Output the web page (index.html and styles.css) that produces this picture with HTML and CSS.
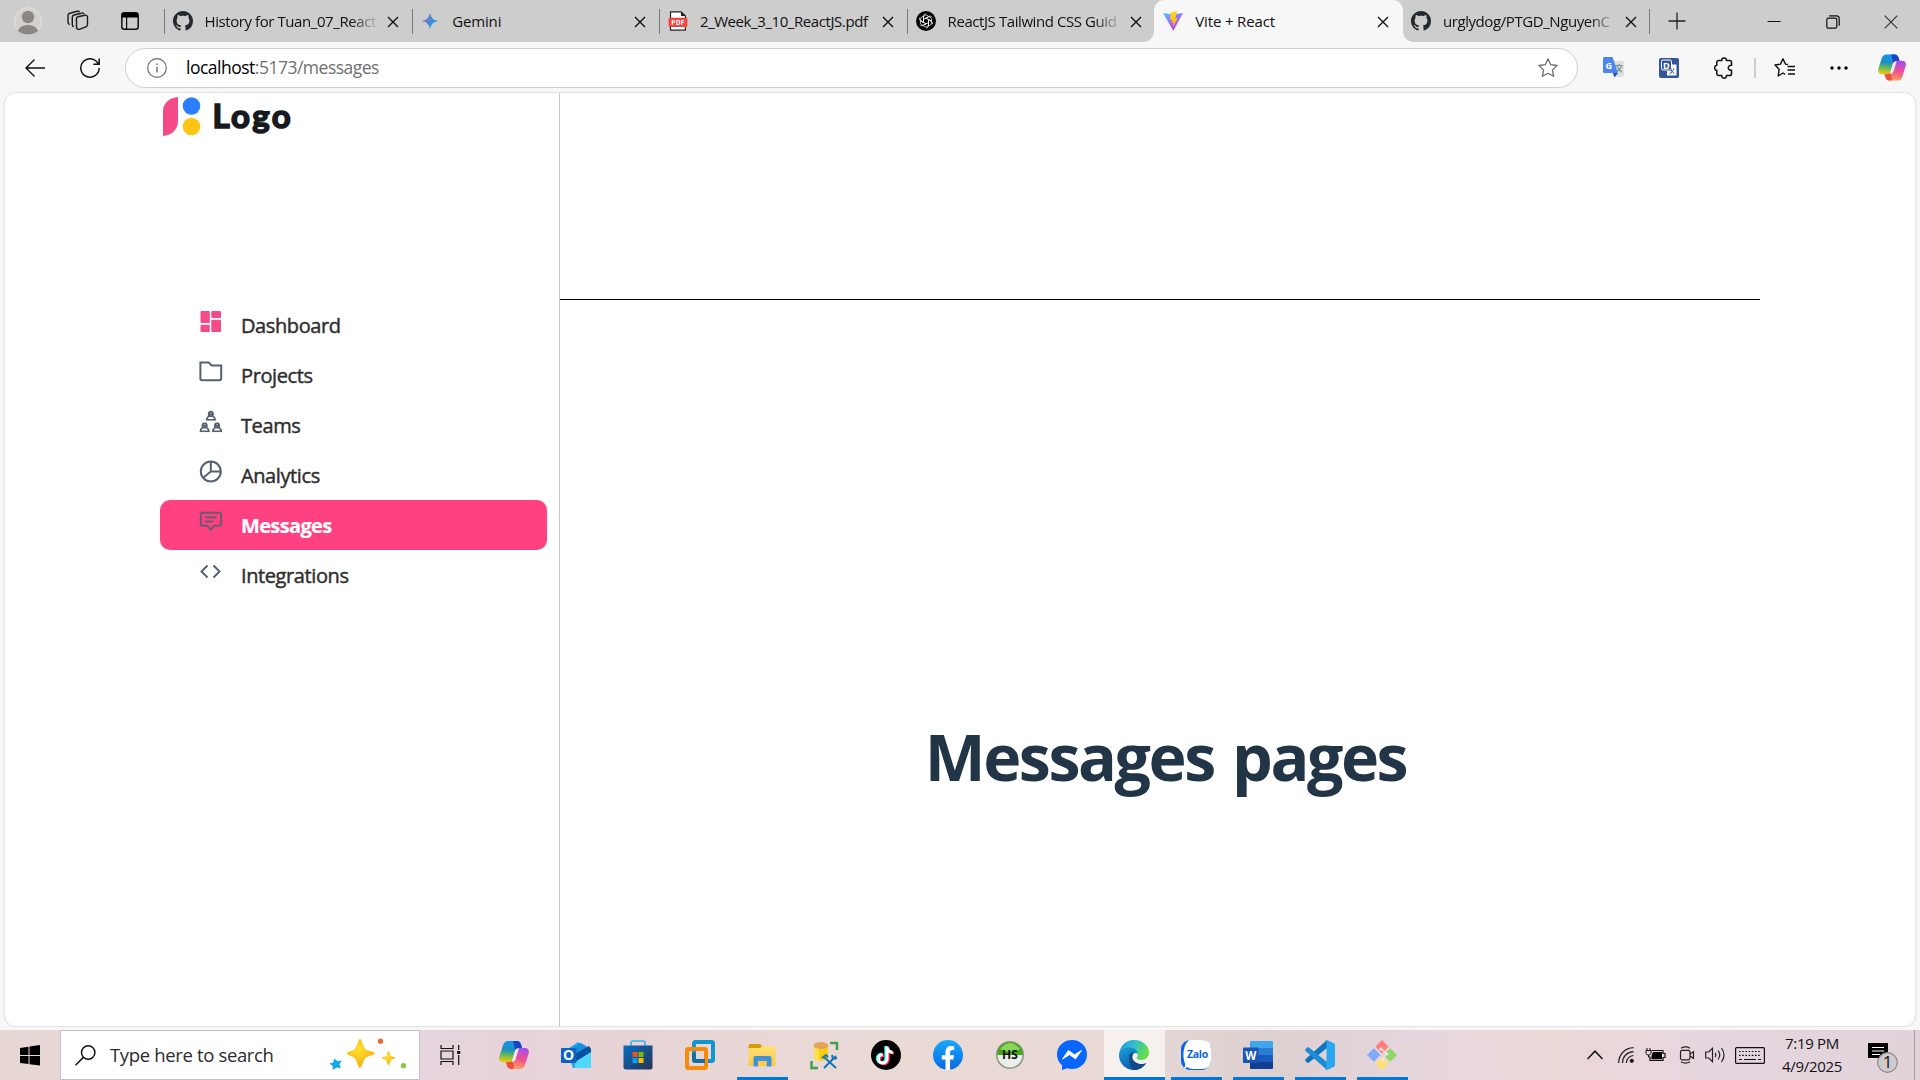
FILE: index.html
```html
<!DOCTYPE html>
<html lang="en">
<head>
<meta charset="utf-8">
<title>Vite + React</title>
<link rel="stylesheet" href="styles.css">
</head>
<body>
<svg class="defs" aria-hidden="true">
  <defs>
    <linearGradient id="gem" x1="0" y1="0.3" x2="1" y2="0.6"><stop offset="0.1" stop-color="#9a70bd"/><stop offset="0.5" stop-color="#4a86d6"/><stop offset="1" stop-color="#1aa6e0"/></linearGradient>
    <linearGradient id="vt" x1="0" y1="0" x2="0.6" y2="1"><stop offset="0" stop-color="#41d1ff"/><stop offset="0.55" stop-color="#9a6bff"/><stop offset="1" stop-color="#bd34fe"/></linearGradient>
    <linearGradient id="vy" x1="0" y1="0" x2="0" y2="1"><stop offset="0" stop-color="#ffdd35"/><stop offset="1" stop-color="#ffa800"/></linearGradient>
    <linearGradient id="cpa" x1="0.4" y1="0" x2="0.3" y2="1"><stop offset="0" stop-color="#1593f0"/><stop offset="0.4" stop-color="#1d8fc4"/><stop offset="0.65" stop-color="#62b85a"/><stop offset="1" stop-color="#f5cf0a"/></linearGradient>
    <linearGradient id="cpb" x1="0.6" y1="0" x2="0.4" y2="1"><stop offset="0" stop-color="#a54df0"/><stop offset="0.5" stop-color="#ee5090"/><stop offset="1" stop-color="#ffa45c"/></linearGradient>
    <linearGradient id="eg" x1="0" y1="0" x2="1" y2="0.4"><stop offset="0" stop-color="#2190d8"/><stop offset="0.5" stop-color="#2fbfd0"/><stop offset="1" stop-color="#66dc4a"/></linearGradient>
    <linearGradient id="eb" x1="0" y1="0" x2="0.6" y2="1"><stop offset="0" stop-color="#1ba0e0"/><stop offset="1" stop-color="#0c59a4"/></linearGradient>
    <linearGradient id="st" x1="0" y1="0" x2="1" y2="1"><stop offset="0" stop-color="#0b6cc0"/><stop offset="1" stop-color="#243452"/></linearGradient>
    <linearGradient id="fo" x1="0" y1="0" x2="0" y2="1"><stop offset="0" stop-color="#ffe07a"/><stop offset="1" stop-color="#fcc93e"/></linearGradient>
    <linearGradient id="fbg" x1="0" y1="0" x2="0" y2="1"><stop offset="0" stop-color="#1aa9fb"/><stop offset="1" stop-color="#0668e1"/></linearGradient>
    <radialGradient id="sp" cx="0.4" cy="0.35" r="0.7"><stop offset="0" stop-color="#ffe02e"/><stop offset="1" stop-color="#f7ac12"/></radialGradient>
    <symbol id="copilot" viewBox="0 0 30 28">
      <path d="M9 0h9c2.600 0 3.600 2 4.200 4l1 3.300h-3.600c-2 0-3.200 1.200-3.800 3l-2.400 8c-.6 2-2 3-4 3H4C.8 21.300-.4 18.600.3 15.700L4 4.200C4.900 1.500 6.500 0 9 0z" fill="url(#cpa)"/>
      <path d="M13.500 0H18c2.600 0 3.600 2 4.200 4l1 3.300h-3.600c-1.500 0-2.600.7-3.300 1.900L15.200 5C14.600 2.500 14.800.5 13.500 0z" fill="#1747c4"/>
      <path d="M21 28h-9c-2.600 0-3.600-2-4.200-4L7 20.900h3.400c2 0 3.200-1.200 3.800-3l2.400-8c.6-2 2-3 4-3H26c3.200 0 4.400 2.700 3.700 5.600L26 23.800c-.9 2.700-2.500 4.200-5 4.200z" fill="url(#cpb)"/>
      <path d="M12 28c-2.600 0-3.600-2-4.200-4L7 20.900h3.400c1.400 0 2.400-.6 3.100-1.600l1 4.700c.5 2 .3 3.500 0 4z" fill="#f0503c"/>
      <path d="M16.400 9.500c.5-1.500 1.500-2.300 3-2.300h.6l-3.300 10.900c-.7 2-2 2.900-3.900 2.900z" fill="#fff" opacity=".85"/>
    </symbol>
    <symbol id="github" viewBox="0 0 16 16"><path fill="#24292f" d="M8 0C3.580 0 0 3.580 0 8c0 3.540 2.290 6.530 5.470 7.590.4.070.55-.17.55-.38 0-.19-.01-.82-.01-1.490-2.010.37-2.530-.49-2.690-.94-.09-.23-.48-.94-.82-1.130-.28-.15-.68-.52-.01-.53.63-.01 1.080.58 1.230.82.72 1.210 1.870.87 2.330.66.070-.52.28-.87.51-1.070-1.780-.2-3.640-.89-3.640-3.950 0-.87.31-1.590.82-2.150-.08-.2-.36-1.020.08-2.120 0 0 .67-.21 2.200.82.64-.18 1.320-.27 2-.27s1.360.09 2 .27c1.530-1.040 2.200-.82 2.200-.82.44 1.100.16 1.920.08 2.120.51.56.82 1.270.82 2.150 0 3.070-1.870 3.750-3.650 3.950.29.25.54.73.54 1.480 0 1.070-.01 1.930-.01 2.200 0 .21.15.46.55.38A8.010 8.010 0 0 0 16 8c0-4.420-3.580-8-8-8z"/></symbol>
    <symbol id="x" viewBox="0 0 12 12"><path d="M1 1l10 10M11 1L1 11" stroke="#111" stroke-width="1.400" fill="none"/></symbol>
    <symbol id="person" viewBox="0 0 10 9.500"><path d="M3.200 5C2.300 1.700 3.500.9 5 .9s2.700.8 1.800 4.100M.9 8.600C1 6.400 2.200 5.600 3.400 5h3.200c1.200.6 2.400 1.400 2.500 3.600zM3.600 3.100h2.800v2H3.600z" fill="none" stroke="#56606f" stroke-width="1.700"/></symbol>
  </defs>
</svg>

<header class="tabstrip">
  <div class="strip-tools">
    <svg width="28" height="28" viewBox="0 0 28 28"><circle cx="14" cy="14" r="13.300" fill="#d3d1ce" stroke="#e4e2de"/><circle cx="14" cy="10" r="6.200" fill="#8b8785"/><path d="M4 24c2-8 18-8 20 0-5 4.800-15 4.800-20 0z" fill="#8b8785"/></svg>
    <svg width="22" height="22" viewBox="0 0 22 22" fill="none" stroke="#1a1a1a" stroke-width="1.400"><path d="M9.500 8.500c0-1 .5-1.500 1.400-1.800l7-1.500c1.400-.3 2.600.4 2.600 1.800v7.500c0 1.200-.5 1.900-1.600 2.300l-6 2.400c-1.700.6-3.400-.3-3.400-2z"/><path d="M6.700 16.800c-1-.3-1.400-1-1.400-2V7.300c0-1.300.6-2 1.800-2.300l7.800-2c1-.3 1.800.1 2.200 1"/><path d="M2.700 14.500c-1-.3-1.700-1.200-1.700-2.200V5.500c0-1.300.6-2 1.800-2.300l7.500-2c1-.2 1.900.1 2.300.9"/></svg>
    <svg width="18" height="18" viewBox="0 0 18 18"><rect x=".8" y=".8" width="16.400" height="16.400" rx="2.500" fill="none" stroke="#111" stroke-width="1.500"/><path d="M1 5V3q0-2 2-2h12q2 0 2 2v2.500H1zM5 5h1.200v12H5z" fill="#000"/></svg>
  </div>
  <nav class="tabs">
    <div class="tab"><svg class="fav" width="20" height="20"><use href="#github"/></svg><span class="title fade">History for Tuan_07_React</span><svg class="close" width="12" height="12"><use href="#x"/></svg></div>
    <div class="tab"><svg class="fav" width="20" height="20" viewBox="0 0 20 20"><path d="M10 1.500C10.800 6.500 13 9 18.500 10 13 11 10.800 13.500 10 18.500 9.200 13.500 7 11 1.500 10 7 9 9.200 6.500 10 1.500z" fill="url(#gem)"/></svg><span class="title short">Gemini</span><svg class="close" width="12" height="12"><use href="#x"/></svg></div>
    <div class="tab"><svg class="fav" width="20" height="20" viewBox="0 0 20 20"><path d="M2.500.8h10.700l4.200 4.200v14.200H2.500z" fill="#fff" stroke="#222" stroke-width="1.200"/><path d="M13 .8V5h4.500z" fill="#222"/><rect x=".6" y="6.800" width="18.800" height="9.200" rx="1" fill="#f8423f"/><text x="10" y="13.900" class="pdf" text-anchor="middle">PDF</text></svg><span class="title">2_Week_3_10_ReactJS.pdf</span><svg class="close" width="12" height="12"><use href="#x"/></svg></div>
    <div class="tab"><svg class="fav" width="20" height="20" viewBox="0 0 20 20"><circle cx="10" cy="10" r="10" fill="#000"/><g fill="none" stroke="#fff" stroke-width=".8"><path id="petal" d="M7.500 11.400V6.700c0-2.800 4-3.600 5.200-1.100M9 7.700l3.800-2.200c1.200-.7 2.700-.2 3.200.8"/><use href="#petal" transform="rotate(60 10 10)"/><use href="#petal" transform="rotate(120 10 10)"/><use href="#petal" transform="rotate(180 10 10)"/><use href="#petal" transform="rotate(240 10 10)"/><use href="#petal" transform="rotate(300 10 10)"/></g></svg><span class="title fade">ReactJS Tailwind CSS Guid</span><svg class="close" width="12" height="12"><use href="#x"/></svg></div>
    <div class="tab active"><svg class="fav" width="20" height="20" viewBox="0 0 20 20"><path d="M0 2l10 1.500L20 2 10.300 19.700z" fill="url(#vt)"/><path d="M14.300 0L7.500 1.300 7 9l2.200-.5-.7 3.400 2-.5-.8 5.300 5-9.700-2.500.5z" fill="url(#vy)"/></svg><span class="title short">Vite + React</span><svg class="close" width="12" height="12"><use href="#x"/></svg></div>
    <div class="tab"><svg class="fav" width="20" height="20"><use href="#github"/></svg><span class="title fade">urglydog/PTGD_NguyenC</span><svg class="close" width="12" height="12"><use href="#x"/></svg></div>
  </nav>
  <svg class="plus" width="18" height="18" viewBox="0 0 18 18"><path d="M9 .5v17M.5 9h17" stroke="#222" stroke-width="1.300"/></svg>
  <div class="window-controls">
    <svg width="14" height="14" viewBox="0 0 14 14"><path d="M.5 6.500h13" stroke="#111"/></svg>
    <svg width="14" height="14" viewBox="0 0 14 14" fill="none" stroke="#111" stroke-width="1.200"><rect x=".8" y="3.200" width="10" height="10" rx="1.500"/><path d="M3.200.8h7.300q2.700 0 2.700 2.700v7.300"/></svg>
    <svg width="14" height="14" viewBox="0 0 14 14"><path d="M.7.7l12.600 12.600M13.300.7L.7 13.300" stroke="#333" stroke-width="1.200"/></svg>
  </div>
</header>

<div class="toolbar">
  <svg class="back" width="20" height="18" viewBox="0 0 20 18" fill="none" stroke="#111" stroke-width="1.400"><path d="M20 9H1M9.500.6L1 9l8.500 8.400"/></svg>
  <svg class="reload" width="20" height="20" viewBox="0 0 20 20" fill="none" stroke="#111" stroke-width="1.500"><path d="M18.400 6.200A9.200 9.200 0 1 0 19.200 10M19.200.5v5.800h-5.800"/></svg>
  <div class="address">
    <svg width="20" height="20" viewBox="0 0 20 20" fill="none" stroke="#6b6b6b" stroke-width="1.200"><circle cx="10" cy="10" r="9.300"/><path d="M10 8.800v5.700M10 5.500v1.600" stroke-width="1.400"/></svg>
    <span class="url">localhost<span>:5173/messages</span></span>
    <svg class="star" width="22" height="22" viewBox="0 0 22 22"><path d="M11 1.800l2.700 5.900 6.400.8-4.700 4.400 1.200 6.400-5.600-3.100-5.600 3.100 1.200-6.400L1.900 8.500l6.400-.8z" fill="none" stroke="#6e6e6e" stroke-width="1.300" stroke-linejoin="round"/></svg>
  </div>
  <div class="extensions">
    <svg width="21" height="21" viewBox="0 0 21 21"><path d="M8 4h11.500q1.200 0 1.200 1.200v14.600H12z" fill="#dcdcdc"/><path d="M12.500 8.500h7M16 7v1.500M14 9c1 3 3 5 5 6M18.500 9c-1 3-3 5-5 6" stroke="#6f9391" stroke-width="1.100" fill="none"/><path d="M1 0h8.500l5.500 16H1.200Q0 16 0 15V1z" fill="#4a86ee"/><path d="M9.800 16H15l-3.500 4.500z" fill="#2850c0"/><text x="2.600" y="11.800" class="gicon">G</text></svg>
    <svg class="dictionary" width="20" height="20" viewBox="0 0 20 20"><rect width="20" height="20" rx="2" fill="#35559a"/><rect x="2.500" y="2" width="10" height="10" rx="1.500" fill="none" stroke="#fff"/><text x="4" y="10.500" class="dicon">D</text><path d="M13 6.500h4.500v11H8V13h5z" fill="#fff"/><path d="M10.500 15.700c2-.5 4-3 4.500-5.500M11.500 12l4 3.800" stroke="#35559a" fill="none"/></svg>
    <svg class="puzzle" width="20" height="22" viewBox="0 0 20 22"><path d="M4.500 3.500h3.200c0-3.500 4.800-3.500 4.800 0h3.200q1.800 0 1.800 1.800v3c-4.300-.4-4.300 5.400 0 5v3.400q0 1.800-1.800 1.800h-3.200c0 3.500-4.800 3.500-4.800 0H4.500q-1.700 0-1.700-1.800v-3.200c-2.900-.4-2.900-4.900 0-5.300V5.300q0-1.800 1.700-1.800z" fill="none" stroke="#111" stroke-width="1.500"/></svg>
    <i class="divider"></i>
    <svg class="favorites" width="22" height="22" viewBox="0 0 22 22" fill="none" stroke="#111" stroke-width="1.400" stroke-linejoin="round"><path d="M14 7.500l-2.500-.4L8.900 1.800 6.500 7.100l-5.500.9 4.100 4.200L4.200 19l4.700-3 2.300 1.300M13.500 9.500H21M13.500 13H21M14 17h7"/></svg>
    <svg class="more" width="18" height="4" viewBox="0 0 18 4"><circle cx="2" cy="2" r="1.700"/><circle cx="9" cy="2" r="1.700"/><circle cx="16" cy="2" r="1.700"/></svg>
    <svg class="assistant" width="28" height="27"><use href="#copilot"/></svg>
  </div>
</div>

<main class="page">
  <aside class="sidebar">
    <div class="logo">
      <svg width="38" height="39" viewBox="0 0 38 39"><path d="M0 39V14C0 6 7 .5 15 0v24c0 9-7 14.500-15 15z" fill="#f54a88"/><circle cx="28.500" cy="9" r="8.800" fill="#2b7fff"/><circle cx="28.500" cy="29.500" r="8.800" fill="#ffc414"/></svg>
      <span>Logo</span>
    </div>
    <ul class="menu">
      <li><svg width="24" height="24" viewBox="0 0 24 24" fill="#f54a88"><rect x="1.500" y="1" width="9.300" height="12" rx="1"/><rect x="12.300" y="1" width="9.700" height="7" rx="1"/><rect x="1.500" y="14.700" width="9.300" height="7.300" rx="1"/><rect x="12.300" y="9.700" width="9.700" height="12.300" rx="1"/></svg><span>Dashboard</span></li>
      <li><svg width="24" height="24" viewBox="0 0 24 24"><path d="M1.400 2.500h8.300l3 3h9.500v13q0 1.700-1.700 1.700H3q-1.600 0-1.600-1.700z" fill="none" stroke="#56606f" stroke-width="2"/></svg><span>Projects</span></li>
      <li><svg width="24" height="24" viewBox="0 0 24 24"><use href="#person" x="6.600" y=".8" width="10.500" height="10"/><use href="#person" x=".4" y="12.300" width="10.500" height="10"/><use href="#person" x="12.800" y="12.300" width="10.500" height="10"/></svg><span>Teams</span></li>
      <li><svg width="24" height="24" viewBox="0 0 24 24" fill="none" stroke="#56606f" stroke-width="2"><circle cx="11.800" cy="11.500" r="10"/><path d="M11.800 1.500v10h10M11.800 11.500l-7.600 6.300"/></svg><span>Analytics</span></li>
      <li class="current"><svg width="24" height="24" viewBox="0 0 24 24" fill="none" stroke="#6c5a70" stroke-width="2"><path d="M3.500 2.700h17q1.700 0 1.700 1.700V14q0 1.700-1.700 1.700h-5.200l-3.500 4-3.500-4H3.500q-1.700 0-1.700-1.700V4.400q0-1.700 1.700-1.700zM6 7.300h11.500M6 11.500h8"/></svg><span>Messages</span></li>
      <li><svg width="24" height="24" viewBox="0 0 24 24" fill="none" stroke="#56606f" stroke-width="2"><path d="M8.500 5.500l-6 6 6 6M14.500 5.500l6 6-6 6"/></svg><span>Integrations</span></li>
    </ul>
  </aside>
  <section class="content">
    <div class="topbar"></div>
    <h1>Messages pages</h1>
  </section>
</main>

<footer class="taskbar">
  <div class="start"><svg width="20" height="21" viewBox="0 0 20 21"><path d="M0 3l8.500-1.300v8.200H0zM9.500 1.500L20 0v9.900H9.500zM0 10.900h8.500v8.200L0 17.900zM9.500 10.900H20v9.600l-10.500-1.300z"/></svg></div>
  <div class="search">
    <svg width="21" height="21" viewBox="0 0 21 21" fill="none" stroke="#111" stroke-width="1.500"><circle cx="13.200" cy="7.500" r="6.700"/><path d="M8.300 12.400L.5 20.200"/></svg>
    <span>Type here to search</span>
    <svg class="sparkle" width="78" height="32" viewBox="0 0 78 32"><path d="M31 1c2 0 3 8 5.500 10.200C38.500 13 46 13.500 46 15.200S38.500 18 36.500 20C34 22.500 33 30 31 30s-3-7.500-5.500-10c-2-2-7.500-3-7.500-4.800s5.500-2.200 7.500-4C28 9 29 1 31 1z" fill="url(#sp)"/><path d="M59.500 13c1 0 1.500 4.200 2.500 5s4.500 1 4.500 2-3.500 1.200-4.500 2.200-1.500 5-2.500 5-1.500-4-2.500-5-4.500-1.200-4.500-2.200 3.500-1.200 4.500-2 1.500-5 2.500-5z" fill="url(#sp)"/><path d="M5 20.500l3.700 2.700 4-.7-2.200 3.700 1.200 4-4-.7L3.500 32l.3-4-3.600-2.500 4-.8z" fill="#10a7ee"/><circle cx="51.500" cy="3.200" r="2.600" fill="#f1642b"/><circle cx="74.500" cy="27.700" r="2.600" fill="#83c83c"/></svg>
  </div>
  <div class="app taskview"><svg width="21" height="20" viewBox="0 0 21 20" fill="none" stroke="#111" stroke-width="1.200"><path d="M1 0v3.500h12V0M1 20v-3.500h12V20M1 6h12v8H1zM18.700 0v5M18.700 10v10"/><path d="M17.200 6h3v3h-3z" fill="#111" stroke="none"/></svg></div>
  <div class="app"><svg width="30" height="28"><use href="#copilot"/></svg></div>
  <div class="app"><svg width="30" height="28" viewBox="0 0 30 28"><path d="M5 9L17 1l13 8v16q0 2-2 2H12z" fill="#28a8ea"/><path d="M11 7l9-5 8 5-12 9z" fill="#1490df"/><path d="M14 13l14-8 2 3v4L15 21z" fill="#0b4ea2"/><path d="M14 21l16-10v14q0 2-2 2H14z" fill="#50d9ff"/><rect y="7" width="15.500" height="15" rx="1" fill="#0a64c0"/><text x="7.700" y="19" class="olk" text-anchor="middle">O</text></svg></div>
  <div class="app"><svg width="30" height="30" viewBox="0 0 30 30"><path d="M8 7V3q0-2 2-2h10q2 0 2 2v4" fill="none" stroke="#35b7ee" stroke-width="1.700"/><path d="M.5 5.500h29V27q0 2.500-2.500 2.500H3Q.5 29.500.5 27z" fill="url(#st)"/><path d="M9.500 12h5v5h-5z" fill="#f25022"/><path d="M15.500 12h5v5h-5z" fill="#7fba00"/><path d="M9.500 18h5v5h-5z" fill="#00a4ef"/><path d="M15.500 18h5v5h-5z" fill="#ffb900"/></svg></div>
  <div class="app"><svg width="30" height="30" viewBox="0 0 30 30" fill="none" stroke-width="4"><rect x="9" y="2" width="19" height="19" rx="1.500" stroke="#0f95d1"/><rect x="2" y="9" width="19" height="19" rx="1.500" stroke="#f58a0b"/><path d="M9 13v6.500q0 1.500 1.500 1.500H20" stroke="#146f9f"/></svg></div>
  <div class="app open"><svg width="28" height="25" viewBox="0 0 28 25"><path d="M.5 3Q.5 1 2.500 1h9q1.500 0 2 1.500L14 5H.5z" fill="#dd9900"/><path d="M.5 5H12l2-2h13.500v20H.5z" fill="url(#fo)"/><path d="M5.500 23.500V15q0-2 2-2h14q2 0 2 2v8.500h-4.700V18H10v5.500z" fill="#3f92d8"/></svg></div>
  <div class="app"><svg width="29" height="29" viewBox="0 0 29 29"><path d="M4 4h14v14q-7 3-14 0z" fill="#fbcd0d"/><path d="M4 4h5v15q-3 0-5-1z" fill="#ffe14a"/><ellipse cx="11" cy="4.500" rx="7.500" ry="3.500" fill="#e5a35c"/><path d="M20 2h7v7M1.500 20v7H8" fill="none" stroke="#42a04b" stroke-width="2.500"/><path d="M14 16l12 11M26 15L14 27M12 17l4-3 2 2M22 14l1 4 4-1" fill="none" stroke="#1676bd" stroke-width="2"/></svg></div>
  <div class="app"><svg width="30" height="30" viewBox="0 0 30 30"><circle cx="15" cy="15" r="15"/><g fill="none" stroke-width="3"><path d="M16 6.500v12.300a4.300 4.300 0 1 1-4.300-4.300M16 7c.5 3.500 2.500 5.200 5.700 5.400" stroke="#25f4ee" transform="translate(-1.200 -.5)"/><path d="M16 6.500v12.300a4.300 4.300 0 1 1-4.300-4.300M16 7c.5 3.500 2.500 5.200 5.700 5.400" stroke="#fe2c55" transform="translate(1.200 .9)"/><path d="M16 6.500v12.300a4.300 4.300 0 1 1-4.300-4.300M16 7c.5 3.500 2.500 5.200 5.700 5.400" stroke="#fff"/></g></svg></div>
  <div class="app"><svg width="30" height="30" viewBox="0 0 30 30"><circle cx="15" cy="15" r="15" fill="url(#fbg)"/><path d="M12.500 30V19.500H8.800v-4.300h3.700V12c0-4 2.300-6 5.700-6 1.600 0 3 .3 3 .3V10h-1.800c-1.700 0-2.300 1-2.300 2.200v3h4l-.7 4.300h-3.300V30z" fill="#fff"/></svg></div>
  <div class="app"><svg width="30" height="30" viewBox="0 0 30 30"><circle cx="15" cy="15" r="13.200" fill="#eceeea" stroke="#8c968b" stroke-width="1.600"/><path d="M2 15a13 13 0 0 1 26 0z" fill="#46a51a"/><path d="M5 9Q15-3 25 9q-10 5-20 0z" fill="#8ad45a"/><text x="15" y="19.200" class="hs" text-anchor="middle">HS</text></svg></div>
  <div class="app"><svg width="30" height="30" viewBox="0 0 30 30"><path d="M15 0C6.500 0 0 6.200 0 14.500c0 4.300 1.800 8 5 10.700V30l5.300-1.700c1.500.4 3 .7 4.700.7 8.500 0 15-6.200 15-14.500S23.500 0 15 0z" fill="#0866ff"/><path d="M5.500 19l6-8.500 6 4.300 7-4.300-6 8.300-6-4.200z" fill="#fff" stroke="#fff" stroke-width="1" stroke-linejoin="round"/></svg></div>
  <div class="app focus"><svg width="30" height="30" viewBox="0 0 30 30"><path d="M0 16C0 7 6 0 15 0c9 0 15 6 15 12.500 0 5-4 7.500-8 7.500-4.500 0-5-2-3.500-3.700C20 12 15 9 10 9 5 9 1 12 0 16z" fill="url(#eg)"/><path d="M0 15c.5-5 5-7.500 10-7.500 6 0 9 3.500 8.800 7C17.500 11.500 13 13 13 18c0 5 5 9 11 8-2.500 2.800-6 4-9 4C6 30 0 23 0 15z" fill="url(#eb)"/><path d="M10 18c0-3.500 2-6 5-6-3 2.500-2.500 10 5 11.700 3 .6 5.500 0 7.500-1-2 4-7 7.300-12.500 7.300-3-1-5-6-5-12z" fill="#114a8b"/></svg></div>
  <div class="app open"><svg width="30" height="30" viewBox="0 0 30 30"><rect width="30" height="30" rx="9" fill="#0b63e5"/><path d="M8 0h13q9 0 9 9v11q0 9-9 9H12q-4 0-6-2-1 1.500-3.500 1.500C5 26 4 24 3.500 22 1.500 16 2 5 8 0z" fill="#fff"/><text x="16.500" y="17.500" class="zalo" text-anchor="middle">Zalo</text></svg></div>
  <div class="app open"><svg width="30" height="28" viewBox="0 0 30 28"><path d="M8 0h21q1 0 1 1v6H7V1q0-1 1-1z" fill="#41a5ee"/><path d="M7 7h23v7H7z" fill="#2b7cd3"/><path d="M7 14h23v7H7z" fill="#185abd"/><path d="M7 21h23v6q0 1-1 1H8q-1 0-1-1z" fill="#103f91"/><rect y="6.500" width="15.500" height="15.500" rx="1" fill="#1a55b5"/><text x="7.700" y="18.600" class="wrd" text-anchor="middle">W</text></svg></div>
  <div class="app open"><svg width="30" height="30" viewBox="0 0 30 30"><path d="M22 0v8L4 22.500q-1 .7-2 0L.6 21q-.9-1 0-2z" fill="#0f74bd"/><path d="M22 30v-8L4 7.500q-1-.7-2 0L.6 9q-.9 1 0 2z" fill="#1c8cd4"/><path d="M22 0l7 3.300q1 .6 1 1.700v20q0 1.100-1 1.700L22 30q-1 0-2-1l1.500-.5V1.500L20 1q1-1 2-1z" fill="#2aa7f0"/></svg></div>
  <div class="app open"><svg width="30" height="30" viewBox="0 0 30 30"><path d="M15 0l6.700 6.700L15 13.500 8.300 6.700z" fill="#ff7e7e"/><path d="M23.200 8.200L30 15l-6.800 6.800L16.500 15z" fill="#8fd568"/><path d="M15 16.500l6.700 6.800L15 30l-6.700-6.700z" fill="#ffe073"/><path d="M6.800 8.200l6.700 6.800-6.700 6.800L0 15z" fill="#7fabff"/><path d="M14 9l5 4-3 7" fill="none" stroke="#f1e5e4" stroke-width="1.500"/><circle cx="14" cy="9" r="1.600" fill="#f1e5e4"/><circle cx="20" cy="14" r="1.600" fill="#f1e5e4"/><circle cx="15.500" cy="20" r="1.600" fill="#f1e5e4"/></svg></div>
  <div class="tray">
    <svg width="16" height="10" viewBox="0 0 16 10"><path d="M.5 9L8 1.200 15.500 9" fill="none" stroke="#111" stroke-width="1.500"/></svg>
    <svg class="wifi" width="16" height="16" viewBox="0 0 16 16" fill="none" stroke="#222" stroke-width="1.200"><path d="M.7 16C.7 7.500 7 1 15.500.7M4.500 16C4.500 9.500 9 5 15.500 4.700M8.300 16c0-4 3-7.200 7.200-7.500"/><circle cx="13.800" cy="13.800" r="1.500" fill="#111"/></svg>
    <svg class="battery" width="21" height="14" viewBox="0 0 21 14"><path d="M6.500 2.500H18v3h2v4h-2v3H5V9" fill="none" stroke="#111" stroke-width="1.200"/><path d="M8 4h9v7.200H6.500V8z"/><path d="M1 2.500h5v3L4.700 7H2.300L1 5.500zM2 0v2.500M5 0v2.500M3.500 7v2h2" fill="none" stroke="#111"/></svg>
    <svg class="camera" width="16" height="18" viewBox="0 0 16 18" fill="none" stroke="#222" stroke-width="1.200"><rect x="1.500" y="4.300" width="9.500" height="9.500" rx="1.800"/><path d="M11 8l3.500-2.200v6.500L11 10M2 2.200Q6.500-.5 11 2.200M2 15.800q4.500 2.700 9 0"/></svg>
    <svg class="speaker" width="21" height="16" viewBox="0 0 21 16" fill="none" stroke="#222" stroke-width="1.200"><path d="M.7 5h3L7.500 1.300v13.400L3.700 11h-3zM10 6q1.700 2 0 4M13 3.500q3.500 4.500 0 9M16.500 1q5 7 0 14"/></svg>
    <svg class="keyboard" width="30" height="17" viewBox="0 0 30 17" fill="none" stroke="#111" stroke-width="1.200"><rect x=".6" y=".6" width="28.800" height="15.800" rx="1"/><path d="M4 4.500h22M4 8.300h22" stroke-dasharray="1.600 1.600"/><path d="M4 12.500h3M9 12.500h12M23 12.500h3"/></svg>
  </div>
  <div class="clock"><span class="time">7:19 PM</span><span class="date">4/9/2025</span></div>
  <div class="notice"><svg width="32" height="32" viewBox="0 0 32 32"><path d="M0 0h20v15h-4v5l-5-5H0z"/><path d="M4 4.500h12M4 8h12M4 11.500h8" stroke="#fff" stroke-width="1.200"/><circle cx="19.500" cy="19.500" r="9.800" fill="#cfcacc" stroke="#8e898b" stroke-width="1.200"/><text x="19.500" y="25" class="count" text-anchor="middle">1</text></svg></div>
  <i class="desktop-edge"></i>
</footer>
</body>
</html>
```
FILE: styles.css
```css
* { box-sizing: border-box; }
body {
  margin: 0;
  width: 1920px;
  height: 1080px;
  overflow: hidden;
  display: flex;
  flex-direction: column;
  background: #f7f7f7;
  font-family: "Open Sans", "Noto Sans", sans-serif;
  color: #111;
}
svg { display: block; flex: none; }
span { white-space: nowrap; }
.defs { position: absolute; width: 0; height: 0; }

/* Tab strip */
.tabstrip { display: flex; height: 42px; flex: none; background: #cdcdcd; align-items: center; }
.strip-tools { width: 164px; display: flex; align-items: center; padding-left: 14px; gap: 25px; }
.strip-tools svg:last-child { margin-left: 7px; }
.tabs { display: grid; grid-template-columns: repeat(6, 247.700px); height: 42px; }
.tab { display: flex; align-items: center; padding: 0 13px 0 8.500px; position: relative; }
.tab::before { content: ""; position: absolute; left: 0; top: 9px; width: 1px; height: 25px; background: #7a7a7a; }
.tab:last-child::after { content: ""; position: absolute; right: 0; top: 9px; width: 1px; height: 25px; background: #7a7a7a; }
.tab.active { background: #f7f7f7; border-radius: 10px 10px 0 0; margin: 0 -1px 0 -1px; padding: 0 14px 0 9.500px; z-index: 1; }
.tab.active::before, .tab.active::after {
  content: ""; position: absolute; top: auto; bottom: 0; width: 10px; height: 10px;
}
.tab.active::before { left: -10px; background: radial-gradient(circle at 0 0, #cdcdcd 9.500px, #f7f7f7 10px); }
.tab.active::after { right: -10px; background: radial-gradient(circle at 100% 0, #cdcdcd 9.500px, #f7f7f7 10px); }
.tab.active + .tab::before { display: none; }
.title { margin: -1px 0 0 12px; width: 174px; font-size: 15px; line-height: 24px; letter-spacing: -.42px; }
.title.short { letter-spacing: -.15px; }
.fade { -webkit-mask-image: linear-gradient(90deg, #000 84%, transparent 100%); mask-image: linear-gradient(90deg, #000 84%, transparent 100%); }
.close { margin: 2px 0 0 auto; }
.pdf { font: 700 6.500px "Open Sans", sans-serif; fill: #fff; letter-spacing: .3px; }
.plus { margin-left: 18px; }
.window-controls { display: flex; gap: 44.500px; margin: 2px 22px 0 auto; }

/* Toolbar */
.toolbar { height: 51px; flex: none; display: flex; align-items: center; padding: 0 13px 0 25px; }
.reload { margin-left: 35px; }
.address {
  margin: 1px 0 0 25px; width: 1453px; height: 40px; flex: none; display: flex; align-items: center;
  border: 1px solid #cfcfcf; border-radius: 20px; background: #fff; padding: 0 18px 0 21px;
}
.url { margin: -2px 0 0 19px; font-size: 17.500px; letter-spacing: -.5px; color: #000; }
.url span { color: #707070; }
.star { margin-left: auto; }
.extensions { display: flex; align-items: center; padding-left: 25px; }
.dictionary { margin-left: 34.500px; }
.puzzle { margin-left: 35.500px; }
.divider { width: 2px; height: 20px; background: #cfcfcf; margin-left: 19.500px; }
.favorites { margin-left: 18px; }
.more { margin-left: 34.500px; }
.assistant { margin-left: 30px; }

/* Page */
.page {
  height: 933px; margin: 0 5px; flex: none; display: flex; background: #fff;
  border-radius: 10px; overflow: hidden; box-shadow: 0 0 2px rgba(0,0,0,.28);
}
.sidebar { width: 555px; border-right: 1px solid #c8c8c8; padding: 4px 12px 0 155px; }
.logo { display: flex; height: 40px; padding-left: 2.500px; }
.logo span { margin: -2px 0 0 12px; font: 700 33px/40px Lato, sans-serif; letter-spacing: 2.300px; color: #171a20; -webkit-text-stroke: 1.600px #171a20; }
.menu { list-style: none; margin: 163px 0 0; padding: 0; }
.menu li { height: 50px; display: flex; align-items: center; padding-left: 39px; border-radius: 10px; font-size: 20px; letter-spacing: -.4px; color: #2f2f2f; -webkit-text-stroke: .45px #2f2f2f; }
.menu svg { margin-top: -6px; }
.menu span { margin: 1px 0 0 18px; }
.menu .current { background: #ff4081; color: #fff; font-weight: 700; letter-spacing: -.65px; -webkit-text-stroke: .2px #fff; }
.content { width: 1200px; }
.topbar { height: 207px; border-bottom: 1px solid #000; }
h1 { margin: 409px 0 0 11px; text-align: center; font-size: 64.500px; line-height: 94px; font-weight: 700; letter-spacing: -2.450px; word-spacing: 4px; color: #213547; }

/* Taskbar */
.taskbar {
  margin-top: auto; height: 50px; flex: none; display: flex; align-items: center;
  background: linear-gradient(90deg, #e7d8d5 0, #e6d5de 22%, #e8d3d7 31%, #e9dad6 46%, #e9dad6 57%, #ddd0d0 66%, #e6d6de 74%, #ecd7d7 81%, #e6d6df 89%, #e2d2d9 100%);
}
.start { width: 60px; display: flex; justify-content: center; }
.search { width: 360px; height: 50px; border: 1px solid #c3c3c8; background: #fff; display: flex; align-items: center; padding: 0 12px 0 14px; }
.search span { margin: -2px 0 0 14px; font-size: 18.500px; letter-spacing: -.35px; color: #2b2b2b; }
.sparkle { margin-left: auto; margin-top: -2px; }
.app { width: 62px; height: 50px; display: flex; align-items: center; justify-content: center; position: relative; }
.taskview { width: 63px; padding-right: 3px; }
.app.open::after, .app.focus::after { content: ""; position: absolute; bottom: 0; left: 5.500px; width: 51px; height: 3px; background: #0078d7; }
.app.focus { width: 61px; margin-left: 1px; background: #f6f1ef; padding-right: 1px; }
.app.focus::after { left: 0; width: 61px; }
.olk { font: 700 14px "Open Sans", sans-serif; fill: #fff; }
.hs { font: 700 12px "Open Sans", sans-serif; fill: #111; }
.zalo { font: 700 10.500px "Open Sans", sans-serif; letter-spacing: -.3px; fill: #0b63e5; }
.wrd { font: 700 11.500px "Open Sans", sans-serif; fill: #fff; }
.gicon { font: 700 9px "Open Sans", sans-serif; fill: #fff; }
.dicon { font: 700 9px "Open Sans", sans-serif; fill: #fff; }
.tray { margin-left: auto; display: flex; align-items: center; }
.wifi { margin-left: 15px; }
.battery { margin-left: 10.500px; }
.camera { margin-left: 13.500px; }
.speaker { margin-left: 9.500px; }
.keyboard { margin-left: 9.500px; }
.clock { width: 94px; display: flex; flex-direction: column; align-items: center; font-size: 15px; line-height: 23px; letter-spacing: -.3px; }
.notice { width: 55px; padding: 8px 0 0 9px; }
.count { font: 400 17px "Open Sans", sans-serif; fill: #111; }
.desktop-edge { width: 6px; height: 50px; border-left: 1px solid #a99fa5; }
```
